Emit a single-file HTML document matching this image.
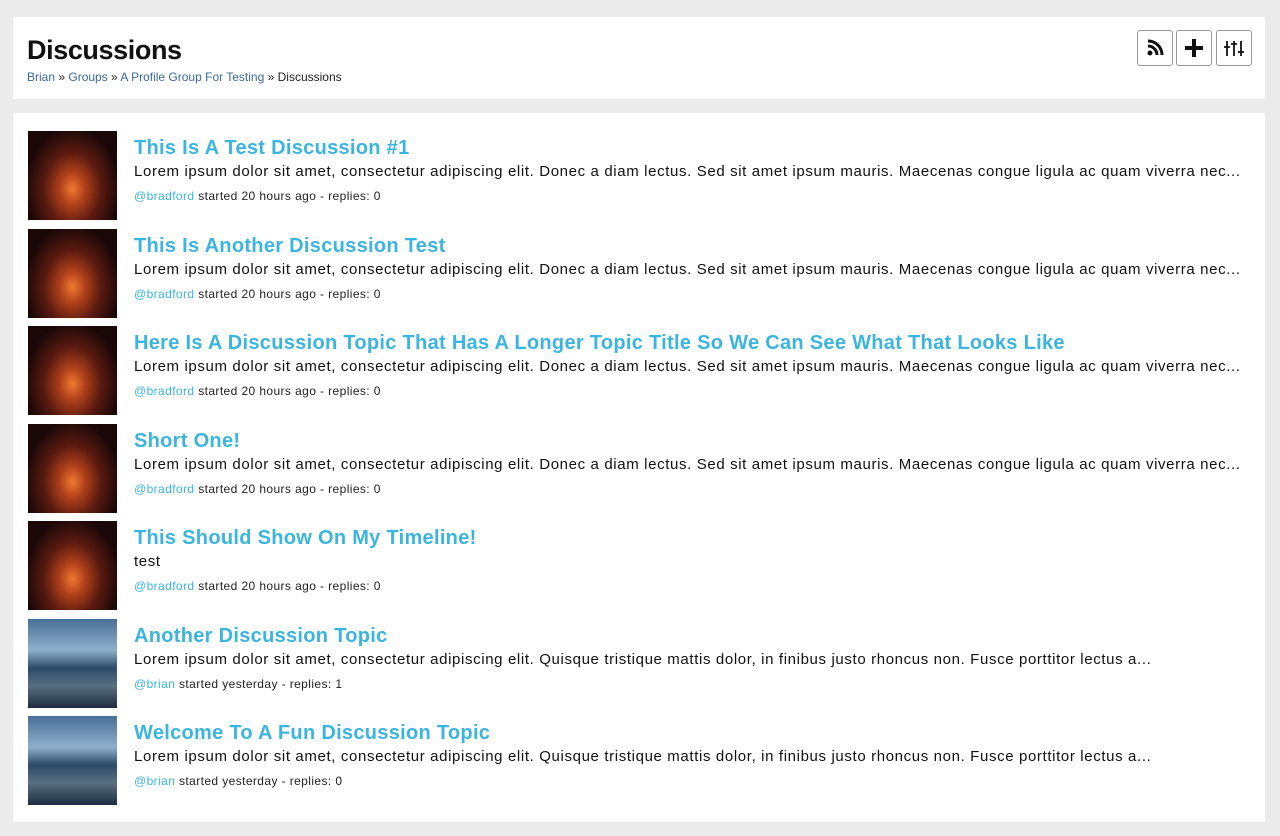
<!DOCTYPE html>
<html><head><style>
body{margin:0;background:#ebebeb;font-family:"Liberation Sans",sans-serif;width:1280px;height:836px;overflow:hidden;position:relative}
.hd{position:absolute;left:13px;top:17px;width:1252px;height:82px;background:#fff}
.hd h1{position:absolute;left:14px;top:18px;margin:0;font-size:27px;font-weight:bold;color:#111;letter-spacing:-0.4px}
.bc{position:absolute;left:14px;top:53px;font-size:12px;color:#222}
.bc a{color:#3a6a9a;text-decoration:none}
.btn{position:absolute;top:13px;width:36px;height:36px;border:1px solid #999;border-radius:3px;background:#fff;box-sizing:border-box}
.list{position:absolute;left:13px;top:113px;width:1252px;height:709px;background:#fff}
.row{position:absolute;left:15px;height:89px;width:1225px}
.img{position:absolute;left:0;top:0;width:89px;height:89px}
.fire{background:radial-gradient(ellipse at 50% 65%,#f07a30 0%,#b0401a 20%,#5a1a10 45%,#1a0808 75%),#200a08}
.sea{background:linear-gradient(180deg,#4a6f96 0%,#8fb0cc 35%,#2c4a6a 55%,#5a6f80 75%,#1e2e40 100%)}
.t{position:absolute;left:106px;top:6px;font-size:20px;font-weight:bold;color:#3bb5e0;white-space:nowrap;letter-spacing:0.3px}
.d{position:absolute;left:106px;top:32px;font-size:15px;color:#111;white-space:nowrap;letter-spacing:0.63px}
.m{position:absolute;left:106px;top:58px;font-size:12px;color:#222;white-space:nowrap;letter-spacing:0.4px}
.m a{color:#3bb5e0}
</style></head><body>
<div class="hd"><h1>Discussions</h1>
<div class="bc"><a>Brian</a> » <a>Groups</a> » <a>A Profile Group For Testing</a> » Discussions</div>
<div class="btn" style="left:1124px"><svg width="34" height="34" viewBox="0 0 34 34"><circle cx="12" cy="22" r="2.5" fill="#111"/><path d="M10 15a9 9 0 0 1 9 9M10 10a14 14 0 0 1 14 14" stroke="#111" stroke-width="3" fill="none"/></svg></div>
<div class="btn" style="left:1163px"><svg width="34" height="34"><path d="M17 8v18M8 17h18" stroke="#111" stroke-width="4"/></svg></div>
<div class="btn" style="left:1203px"><svg width="34" height="34"><g stroke="#111" stroke-width="1.8"><path d="M10 10v15M7 16h6M17 10v15M14 13h6M24 10v15M21 21h6"/></g></svg></div>
</div>
<div class="list">
<div class="row" style="top:18px"><div class="img fire"></div><div class="t">This Is A Test Discussion #1</div><div class="d">Lorem ipsum dolor sit amet, consectetur adipiscing elit. Donec a diam lectus. Sed sit amet ipsum mauris. Maecenas congue ligula ac quam viverra nec...</div><div class="m"><a>@bradford</a> started 20 hours ago - replies: 0</div></div>
<div class="row" style="top:116px"><div class="img fire"></div><div class="t">This Is Another Discussion Test</div><div class="d">Lorem ipsum dolor sit amet, consectetur adipiscing elit. Donec a diam lectus. Sed sit amet ipsum mauris. Maecenas congue ligula ac quam viverra nec...</div><div class="m"><a>@bradford</a> started 20 hours ago - replies: 0</div></div>
<div class="row" style="top:213px"><div class="img fire"></div><div class="t">Here Is A Discussion Topic That Has A Longer Topic Title So We Can See What That Looks Like</div><div class="d">Lorem ipsum dolor sit amet, consectetur adipiscing elit. Donec a diam lectus. Sed sit amet ipsum mauris. Maecenas congue ligula ac quam viverra nec...</div><div class="m"><a>@bradford</a> started 20 hours ago - replies: 0</div></div>
<div class="row" style="top:311px"><div class="img fire"></div><div class="t">Short One!</div><div class="d">Lorem ipsum dolor sit amet, consectetur adipiscing elit. Donec a diam lectus. Sed sit amet ipsum mauris. Maecenas congue ligula ac quam viverra nec...</div><div class="m"><a>@bradford</a> started 20 hours ago - replies: 0</div></div>
<div class="row" style="top:408px"><div class="img fire"></div><div class="t">This Should Show On My Timeline!</div><div class="d">test</div><div class="m"><a>@bradford</a> started 20 hours ago - replies: 0</div></div>
<div class="row" style="top:506px"><div class="img sea"></div><div class="t">Another Discussion Topic</div><div class="d">Lorem ipsum dolor sit amet, consectetur adipiscing elit. Quisque tristique mattis dolor, in finibus justo rhoncus non. Fusce porttitor lectus a...</div><div class="m"><a>@brian</a> started yesterday - replies: 1</div></div>
<div class="row" style="top:603px"><div class="img sea"></div><div class="t">Welcome To A Fun Discussion Topic</div><div class="d">Lorem ipsum dolor sit amet, consectetur adipiscing elit. Quisque tristique mattis dolor, in finibus justo rhoncus non. Fusce porttitor lectus a...</div><div class="m"><a>@brian</a> started yesterday - replies: 0</div></div>
</div>
</body></html>
